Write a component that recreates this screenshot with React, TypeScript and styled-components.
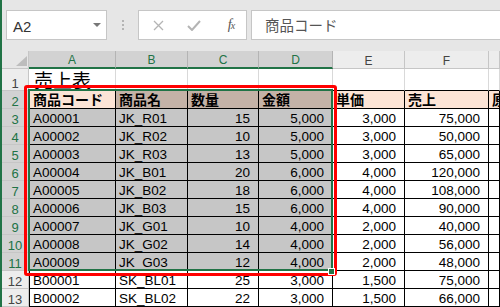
import styled, { createGlobalStyle } from 'styled-components';

const GlobalStyle = createGlobalStyle`
	html, body {
		margin: 0;
		padding: 0;
		background: #ffffff;
	}
`;

const GREEN = '#217346';
const PEACH = '#fce4d6';
const PEACH_SEL = '#c4b2a7';
const WHITE_SEL = '#c6c6c6';

const Window = styled.div`
	width: 500px;
	height: 307px;
	overflow: hidden;
	box-sizing: border-box;
	border-left: 2px solid ${GREEN};
	background: #e6e6e6;
	display: flex;
	flex-direction: column;
	font-family: 'Liberation Sans', 'Noto Sans CJK JP', sans-serif;
`;

const FormulaBar = styled.div`
	height: 51px;
	flex: none;
	box-sizing: border-box;
	display: flex;
	align-items: flex-start;
	padding: 10px 0 0 4px;
`;

const Box = styled.div`
	box-sizing: border-box;
	height: 30px;
	background: #ffffff;
	border: 1px solid #c6c6c6;
	display: flex;
	align-items: center;
`;

const NameBox = styled(Box)`
	width: 101px;
	padding: 3px 0 0 6px;
	justify-content: space-between;
	font-size: 15px;
	color: #333;
`;

const Caret = styled.span`
	width: 0;
	height: 0;
	margin: -3px 5px 0 0;
	border-left: 4px solid transparent;
	border-right: 4px solid transparent;
	border-top: 4px solid #777;
`;

const Grip = styled.div`
	width: 31px;
	height: 30px;
	display: flex;
	flex-direction: column;
	align-items: center;
	justify-content: center;
	gap: 2px;
`;

const Dot = styled.span`
	width: 2px;
	height: 2px;
	background: #b4b4b4;
`;

const Buttons = styled(Box)`
	width: 109px;
	padding: 0 0 0 13px;
`;

const IconSlot = styled.span<{ $w: number }>`
	width: ${(p) => p.$w}px;
	display: flex;
	justify-content: center;
	align-items: center;
`;

const Fx = styled.span`
	font-family: 'Liberation Serif', serif;
	font-style: italic;
	font-size: 14px;
	color: #555;
	letter-spacing: -1px;
	small {
		font-size: 10px;
	}
`;

const FormulaInput = styled(Box)`
	flex: 1;
	margin-left: 4px;
	margin-right: -2px;
	padding: 0 0 2px 13px;
	font-family: 'Noto Sans CJK JP', sans-serif;
	font-size: 14.5px;
	color: #555;
`;

const Sheet = styled.div`
	position: relative;
	flex: 1;
	display: grid;
	grid-template-columns: 27px 87px 72px 71px 74px 72px 84px 1fr;
	grid-template-rows: 18px 22px repeat(12, 18px);
	background: #ffffff;
`;

const Corner = styled.div`
	background: #e6e6e6;
	border-right: 1px solid #c6c6c6;
	border-bottom: 1px solid #c6c6c6;
	box-sizing: border-box;
	display: flex;
	align-items: flex-end;
	justify-content: flex-end;
	padding: 0 1px 2px 0;
`;

const ColHead = styled.div<{ $selected?: boolean }>`
	box-sizing: border-box;
	display: flex;
	align-items: center;
	justify-content: center;
	padding-top: 3px;
	font-size: 12px;
	line-height: 13px;
	background: ${(p) => (p.$selected ? '#d2d2d2' : '#ededed')};
	color: ${(p) => (p.$selected ? GREEN : '#444')};
	border-right: 1px solid ${(p) => (p.$selected ? '#b4b4b4' : '#c6c6c6')};
	border-bottom: ${(p) => (p.$selected ? `2px solid ${GREEN}` : '1px solid #c6c6c6')};
`;

const RowHead = styled.div<{ $selected?: boolean }>`
	box-sizing: border-box;
	display: flex;
	align-items: flex-end;
	justify-content: center;
	font-size: 13px;
	line-height: 12px;
	background: ${(p) => (p.$selected ? '#d2d2d2' : '#ededed')};
	color: ${(p) => (p.$selected ? GREEN : '#444')};
	border-right: 1px solid #c6c6c6;
	border-bottom: 1px solid #c6c6c6;
`;

const Cell = styled.div<{ $fill?: string; $num?: boolean; $lead?: boolean }>`
	box-sizing: border-box;
	display: flex;
	align-items: flex-end;
	justify-content: ${(p) => (p.$num ? 'flex-end' : 'flex-start')};
	padding: ${(p) => (p.$num ? '0 8px 0 0' : '0 0 0 3px')};
	background: ${(p) => p.$fill ?? '#ffffff'};
	border-right: 1px solid #000;
	border-bottom: 1px solid #000;
	border-left: ${(p) => (p.$lead ? '1px solid #000' : 'none')};
	font-size: 13.5px;
	line-height: 15px;
	color: #000;
	white-space: nowrap;
	min-width: 0;
`;

const HeadCell = styled(Cell)`
	font-family: 'Noto Sans CJK JP', sans-serif;
	font-weight: 700;
	font-size: 14px;
	line-height: 17px;
`;

const TitleCell = styled.div`
	box-sizing: border-box;
	display: flex;
	align-items: flex-end;
	padding-left: 5px;
	border-right: 1px solid #d9d9d9;
	border-bottom: 1px solid #000;
	font-family: 'Noto Sans CJK JP', sans-serif;
	font-size: 19px;
	line-height: 20px;
	white-space: nowrap;
`;

const RedFrame = styled.div`
	position: absolute;
	left: 22px;
	top: 34px;
	width: 313px;
	height: 191px;
	box-sizing: border-box;
	border: 3px solid #ff0000;
	border-radius: 3px;
	pointer-events: none;
`;

const Selection = styled.div`
	position: absolute;
	left: 26px;
	top: 38px;
	width: 305px;
	height: 182px;
	box-sizing: border-box;
	border: 2px solid ${GREEN};
	pointer-events: none;
`;

const FillHandle = styled.div`
	position: absolute;
	left: 326px;
	top: 217px;
	width: 7px;
	height: 7px;
	box-sizing: border-box;
	border: 1px solid #ffffff;
	background: ${GREEN};
`;

const columns = ['A', 'B', 'C', 'D', 'E', 'F', ''];
const headers = ['商品コード', '商品名', '数量', '金額', '単価', '売上', '原価'];

const rows: [string, string, number, string, string, string][] = [
	['A00001', 'JK_R01', 15, '5,000', '3,000', '75,000'],
	['A00002', 'JK_R02', 10, '5,000', '3,000', '50,000'],
	['A00003', 'JK_R03', 13, '5,000', '3,000', '65,000'],
	['A00004', 'JK_B01', 20, '6,000', '4,000', '120,000'],
	['A00005', 'JK_B02', 18, '6,000', '4,000', '108,000'],
	['A00006', 'JK_B03', 15, '6,000', '4,000', '90,000'],
	['A00007', 'JK_G01', 10, '4,000', '2,000', '40,000'],
	['A00008', 'JK_G02', 14, '4,000', '2,000', '56,000'],
	['A00009', 'JK_G03', 12, '4,000', '2,000', '48,000'],
	['B00001', 'SK_BL01', 25, '3,000', '1,500', '75,000'],
	['B00002', 'SK_BL02', 22, '3,000', '1,500', '66,000'],
];

export default function App() {
	return (
		<>
			<GlobalStyle />
			<Window>
				<FormulaBar>
					<NameBox>
						A2
						<Caret />
					</NameBox>
					<Grip>
						<Dot />
						<Dot />
						<Dot />
					</Grip>
					<Buttons>
						<IconSlot $w={12}>
							<svg width="11" height="11" viewBox="0 0 11 11">
								<path d="M1 1 L10 10 M10 1 L1 10" stroke="#b4b4b4" strokeWidth="1.3" fill="none" />
							</svg>
						</IconSlot>
						<IconSlot $w={60}>
							<svg width="14" height="11" viewBox="0 0 14 11">
								<path d="M1 6 L5 10 L13 1" stroke="#b4b4b4" strokeWidth="2" fill="none" />
							</svg>
						</IconSlot>
						<IconSlot $w={14}>
							<Fx>
								f<small>x</small>
							</Fx>
						</IconSlot>
					</Buttons>
					<FormulaInput>商品コード</FormulaInput>
				</FormulaBar>

				<Sheet>
					<Corner>
						<svg width="11" height="10" viewBox="0 0 11 10">
							<polygon points="11,0 11,10 0,10" fill="#bdbdbd" />
						</svg>
					</Corner>
					{columns.map((c, i) => (
						<ColHead key={`h${i}`} $selected={i < 4}>
							{c}
						</ColHead>
					))}

					<RowHead>1</RowHead>
					<TitleCell>売上表</TitleCell>
					{columns.slice(1).map((_, i) => (
						<TitleCell key={`t${i}`} />
					))}

					<RowHead $selected>2</RowHead>
					{headers.map((h, i) => (
						<HeadCell
							key={`c${i}`}
							$lead={i === 0}
							$fill={i === 0 ? PEACH : i < 4 ? PEACH_SEL : PEACH}
						>
							{h}
						</HeadCell>
					))}

					{rows.map((r, ri) => {
						const selected = ri < 9;
						const fill = selected ? WHITE_SEL : '#ffffff';
						return [
							<RowHead key={`r${ri}`} $selected={selected}>
								{ri + 3}
							</RowHead>,
							<Cell key={`a${ri}`} $lead $fill={fill}>
								{r[0]}
							</Cell>,
							<Cell key={`b${ri}`} $fill={fill}>
								{r[1]}
							</Cell>,
							<Cell key={`c${ri}`} $num $fill={fill}>
								{r[2]}
							</Cell>,
							<Cell key={`d${ri}`} $num $fill={fill}>
								{r[3]}
							</Cell>,
							<Cell key={`e${ri}`} $num>
								{r[4]}
							</Cell>,
							<Cell key={`f${ri}`} $num>
								{r[5]}
							</Cell>,
							<Cell key={`g${ri}`} />,
						];
					})}

					<RedFrame />
					<Selection />
					<FillHandle />
				</Sheet>
			</Window>
		</>
	);
}
